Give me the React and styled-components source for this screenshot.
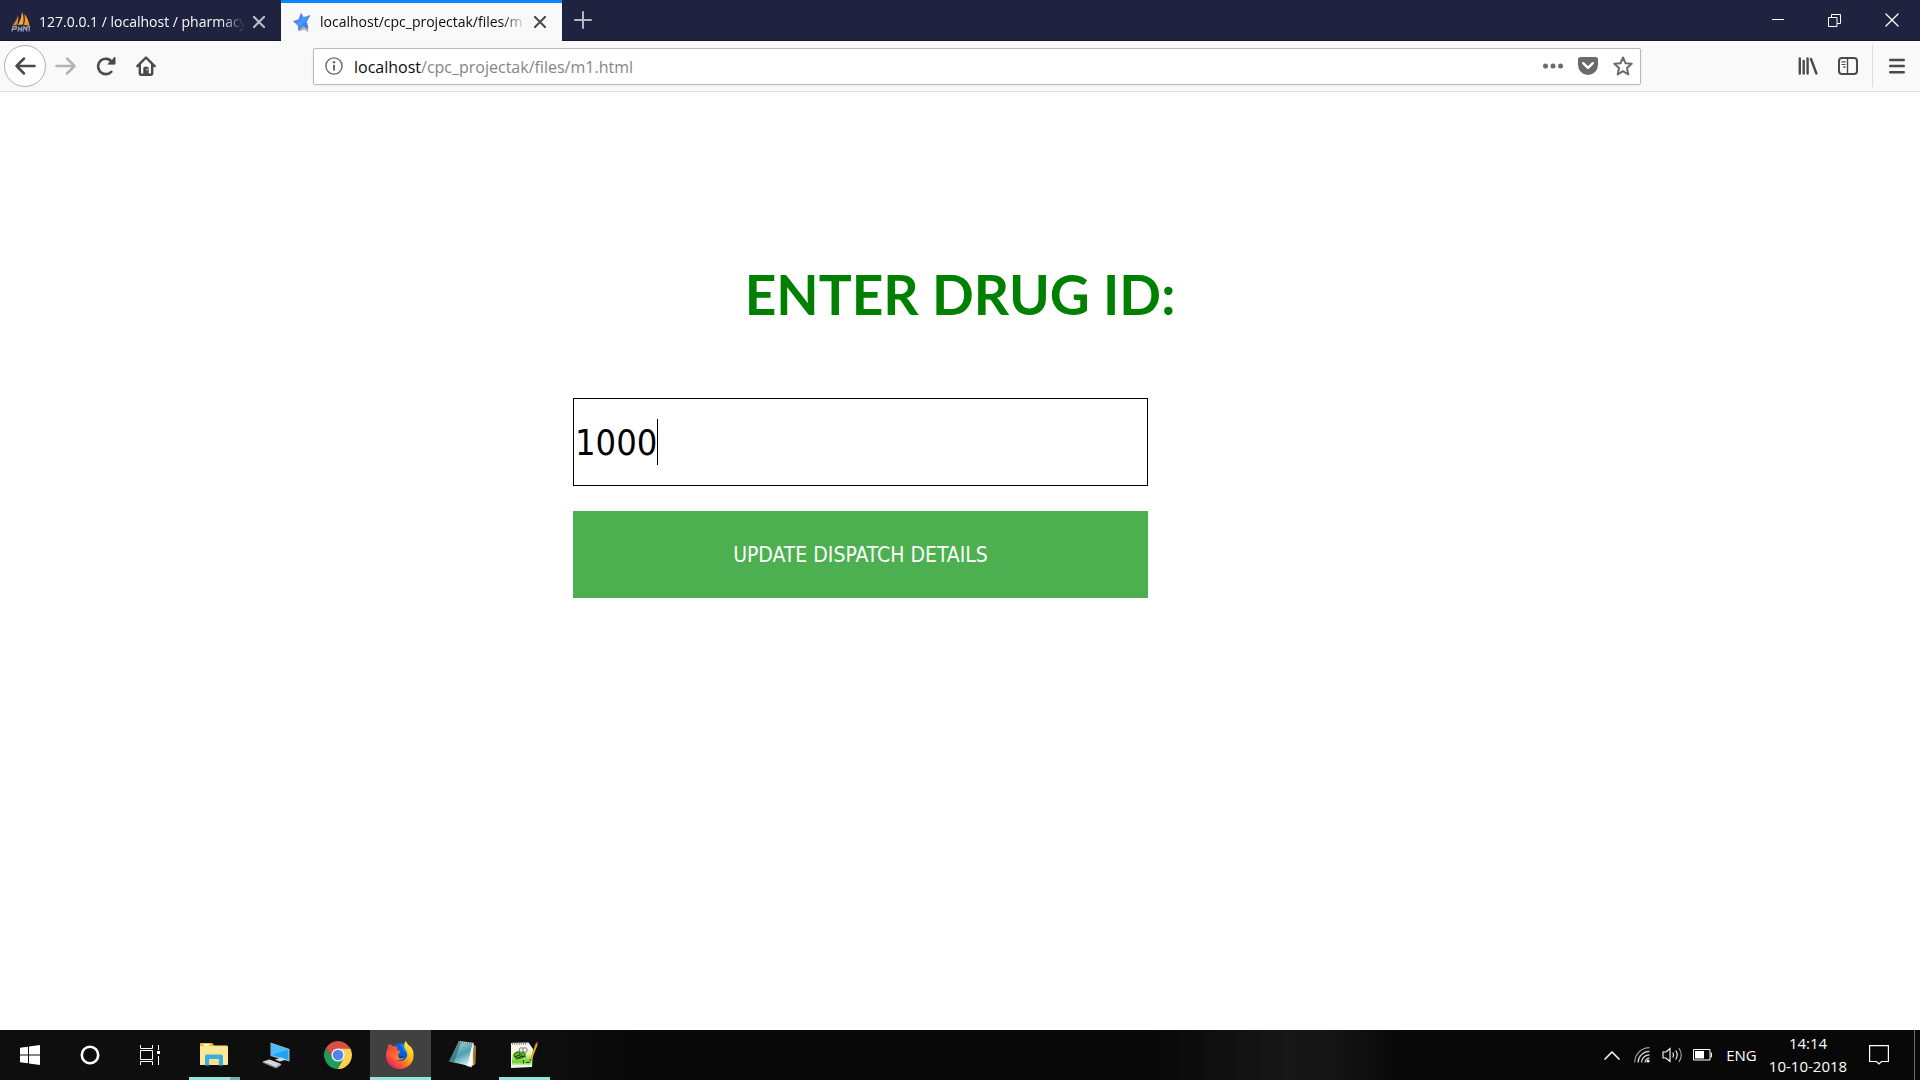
import React, { useState } from "react";
import styled, { createGlobalStyle } from "styled-components";

const uiFont = '"Open Sans", "Noto Sans", "Liberation Sans", sans-serif';
const formFont = '"DejaVu Sans Condensed", "DejaVu Sans", sans-serif';

const GlobalStyle = createGlobalStyle`
  *, *::before, *::after { box-sizing: border-box; }
  html, body, #root { height: 100%; }
  body { margin: 0; background: #fff; font-family: ${uiFont}; overflow: hidden; }
  button { font: inherit; color: inherit; border: 0; padding: 0; background: none; }
  svg { display: block; flex: none; }
`;

const Screen = styled.div`
  display: flex;
  flex-direction: column;
  height: 100%;
`;

/* ---------- browser tabs ---------- */

const TabStrip = styled.header`
  display: flex;
  height: 41px;
  background: #202340;
  border-bottom: 1px solid #14162b;
  color: #fff;
`;

const Tab = styled.div`
  display: flex;
  align-items: center;
  gap: 8px;
  width: 281px;
  height: ${(p) => (p.$active ? 41 : 40)}px;
  padding: 3px 16px 0 11px;
  background: ${(p) => (p.$active ? "#f9f9fa" : "transparent")};
  box-shadow: ${(p) => (p.$active ? "inset 0 3px 0 #0a84ff" : "none")};
  color: ${(p) => (p.$active ? "#0c0c0d" : "#f9f9fa")};
`;

const TabTitle = styled.span`
  flex: 1;
  min-width: 0;
  overflow: hidden;
  white-space: nowrap;
  font-size: 14px;
  line-height: 20px;
  mask-image: linear-gradient(to left, transparent, #000 24px);
`;

const TabClose = styled.button`
  display: flex;
  color: ${(p) => (p.$active ? "#4a4a4b" : "#bcbdc6")};
`;

const NewTab = styled.button`
  display: grid;
  place-items: center;
  width: 42px;
  color: #b5b6c0;
`;

const WindowControls = styled.div`
  display: flex;
  margin-left: auto;
`;

const WindowButton = styled.button`
  display: grid;
  place-items: center;
  width: 57px;
  height: 40px;
`;

/* ---------- navigation toolbar ---------- */

const Toolbar = styled.nav`
  display: flex;
  align-items: center;
  height: 51px;
  padding-left: 4px;
  background: #f9f9fa;
  border-bottom: 1px solid #e0e0e1;
  color: #4a4a4b;
`;

const BackButton = styled.button`
  display: grid;
  place-items: center;
  width: 42px;
  height: 42px;
  border: 1px solid #b0b0b1;
  border-radius: 50%;
  background: #fff;
`;

const ToolButton = styled.button`
  display: grid;
  place-items: center;
  width: ${(p) => p.$width || 40}px;
  height: 36px;
  color: ${(p) => (p.disabled ? "#b3b3b4" : "inherit")};
`;

const Spacer = styled.div`
  flex: 0 1 147px;
`;

const Divider = styled.div`
  width: 1px;
  height: 42px;
  margin-left: 4px;
  background: #dcdcdd;
`;

const UrlBar = styled.div`
  display: flex;
  flex: 1;
  align-items: center;
  height: 37px;
  border: 1px solid #b8b8b9;
  border-radius: 2px;
  background: #fff;
  box-shadow: 0 1px 3px rgba(0, 0, 0, 0.06);
  color: #6a6a6b;
`;

const SiteInfo = styled.button`
  display: grid;
  place-items: center;
  width: 40px;
`;

const Address = styled.a`
  flex: 1;
  padding-top: 2px;
  color: #858586;
  font-size: 16px;
  line-height: 24px;
  text-decoration: none;
`;

const Host = styled.span`
  color: #0c0c0d;
`;

/* ---------- page ---------- */

const Page = styled.main`
  flex: 1;
  background: #fff;
  padding-top: 166px;
`;

const Heading = styled.h1`
  margin: 0;
  color: #008000;
  font-family: Lato, Carlito, sans-serif;
  font-size: 55px;
  font-weight: 700;
  line-height: 72px;
  text-align: center;
`;

const Form = styled.form`
  display: flex;
  flex-direction: column;
  gap: 25px;
  width: calc(30% - 1px);
  margin: 68px 0 0 calc(30% - 3px);
  font-family: ${formFont};
`;

const Field = styled.label`
  display: flex;
  align-items: center;
  height: 88px;
  padding: 0 1px;
  border: 1px solid #000;
  cursor: text;
`;

const DrugInput = styled.input`
  field-sizing: content;
  padding: 2px 0 0;
  border: 0;
  outline: 0;
  background: none;
  color: #000;
  font-family: inherit;
  font-size: 36px;
  line-height: 46px;
`;

const Caret = styled.span`
  width: 1px;
  height: 46px;
  background: #000;
`;

const Submit = styled.button`
  height: 87px;
  background: #4caf50;
  color: #fff;
  font-size: 21px;
  line-height: 24px;
`;

/* ---------- taskbar ---------- */

const Taskbar = styled.footer`
  display: flex;
  height: 50px;
  background: linear-gradient(to right, #0e0e0e 0, #0e0e0e 28%, #080808 33%, #080808 60%, #171717 67%, #161616 69%, #080808 73%);
  color: #fff;
`;

const SystemButton = styled.button`
  display: grid;
  place-items: center;
  width: 60px;
`;

const Apps = styled.div`
  display: flex;
  gap: 1px;
  padding-left: 4px;
`;

const AppButton = styled.button`
  display: flex;
  flex-direction: column;
  align-items: center;
  justify-content: space-between;
  width: 61px;
  padding-top: 11px;
  background: ${(p) => (p.$focused ? "#414141" : "transparent")};

  svg { margin-right: 2px; }
`;

const Running = styled.span`
  width: ${(p) => (p.$wide ? 61 : 51)}px;
  height: 3px;
  border-right: ${(p) => (p.$stacked ? "10px solid #73b3aa" : "0")};
  background: #91e7da;
`;

const Tray = styled.div`
  display: flex;
  align-items: center;
  margin-left: auto;
`;

const TrayButton = styled.button`
  display: grid;
  place-items: center;
  width: 30px;
  height: 50px;
`;

const Language = styled.button`
  width: 49px;
  font-size: 15px;
  line-height: 20px;
`;

const Clock = styled.time`
  width: 84px;
  font-size: 15px;
  line-height: 23px;
  text-align: center;
`;

const ActionCenter = styled.button`
  display: grid;
  place-items: center;
  width: 58px;
  height: 50px;
`;

const ShowDesktop = styled.button`
  width: 6px;
  height: 50px;
  margin-left: 6px;
  border-left: 1px solid #6d6d6d;
`;

/* ---------- drawings ---------- */

const Cross = ({ size = 12, weight = 2 }) => (
  <svg width={size} height={size} viewBox="0 0 12 12" fill="none" stroke="currentColor" strokeWidth={weight} strokeLinecap="round">
    <path d="M.8.8l10.4 10.4M11.2.8L.8 11.2" />
  </svg>
);

const SailsIcon = () => (
  <svg width="20" height="20" viewBox="0 0 20 20">
    <path d="M7 3Q6.500 7 1.500 13.500L6.500 12.500Q8 7 7 3z" fill="#d98a2c" />
    <path d="M11 0Q10.500 7 7 13L12 12.500Q13.500 5 11 0z" fill="#f7a73c" />
    <path d="M13.500 2Q14.500 8 13 13L18.500 13.500Q17.500 7 13.500 2z" fill="#f29a20" />
    <path d="M1 19.500L2 14.500H5.500L5 17H2M7 19.500L8 14.500M7.500 17H10.500M10 19.500L11 14.500M12 19.500L13 14.500L14.500 17L16.500 14.500H18.500L18 19.500M15.500 19.500L16 16" fill="none" stroke="#9a9bb2" strokeWidth="1.300" />
  </svg>
);

const StarFavicon = () => (
  <svg width="20" height="20" viewBox="0 0 20 20">
    <defs>
      <linearGradient id="starBlue" x1="0" y1="0" x2="1" y2="1">
        <stop offset="0" stopColor="#1a5fe0" />
        <stop offset=".5" stopColor="#4d9bff" />
        <stop offset="1" stopColor="#1c5bd6" />
      </linearGradient>
    </defs>
    <path d="M3 10.500L7 15L7 19L12 17L16 19.500L15 14" fill="#b5b0a6" stroke="#b5b0a6" strokeLinejoin="round" />
    <path d="M9 1.500L11.500 5.500L18 3.500L14.500 9.500L16 16.500L11.500 14L6.500 18L6.500 12.500L1.500 9.500L7 7.500z" fill="url(#starBlue)" stroke="#3478e8" strokeWidth=".6" strokeLinejoin="round" />
  </svg>
);

const PlusIcon = () => (
  <svg width="18" height="18" viewBox="0 0 18 18" stroke="currentColor" strokeWidth="2" strokeLinecap="round">
    <path d="M9 1v16M1 9h16" />
  </svg>
);

const Minimize = () => (
  <svg width="12" height="2" viewBox="0 0 12 2"><path d="M0 0h12v1H0z" fill="#fff" /></svg>
);

const Restore = () => (
  <svg width="13" height="13" viewBox="0 0 13 13" fill="none" stroke="#fff">
    <path d="M.5 3.500h8.500v9H.5zM3.500 3.500V.5h9v9H9" />
  </svg>
);

const ArrowLeft = () => (
  <svg width="22" height="20" viewBox="0 0 22 20" fill="none" stroke="currentColor" strokeWidth="2.500" strokeLinecap="round" strokeLinejoin="round">
    <path d="M20.500 10H2.500M10 2.500L2.500 10L10 17.500" />
  </svg>
);

const ArrowRight = () => (
  <svg width="22" height="20" viewBox="0 0 22 20" fill="none" stroke="currentColor" strokeWidth="2.500" strokeLinecap="round" strokeLinejoin="round">
    <path d="M1.500 10H19.500M12 2.500L19.500 10L12 17.500" />
  </svg>
);

const Reload = () => (
  <svg width="20" height="20" viewBox="0 0 20 20" fill="none" stroke="currentColor" strokeWidth="2.600" strokeLinecap="round">
    <path d="M15.300 15.800A7.700 7.700 0 1 1 16.200 6.200" />
    <path d="M18.700 1v7.500h-7.500z" fill="currentColor" stroke="none" />
    <path d="M18.500 2v5.300h-5" strokeWidth="2" />
  </svg>
);

const Home = () => (
  <svg width="20" height="20" viewBox="0 0 20 20" fill="none" stroke="currentColor" strokeWidth="2.400" strokeLinecap="round" strokeLinejoin="round">
    <path d="M1.400 10.200L10 1.500L18.600 10.200" />
    <path d="M3.800 9V17.500Q3.800 18.700 5 18.700H15Q16.200 18.700 16.200 17.500V9" />
    <path d="M7.300 18.500V12Q7.300 10.500 10 10.500Q12.700 10.500 12.700 12V18.500z" fill="currentColor" stroke="none" />
    <path d="M10.600 12.500h1v2h-1z" fill="#f9f9fa" stroke="none" />
  </svg>
);

const Info = () => (
  <svg width="18" height="18" viewBox="0 0 18 18">
    <circle cx="9" cy="9" r="8.100" fill="none" stroke="currentColor" strokeWidth="1.400" />
    <path d="M8 7.800h2V13.500H8z" fill="currentColor" />
    <circle cx="9" cy="5.200" r="1.300" fill="currentColor" />
  </svg>
);

const Dots = () => (
  <svg width="20" height="6" viewBox="0 0 20 6" fill="currentColor">
    <circle cx="2.500" cy="3" r="2.500" /><circle cx="10" cy="3" r="2.500" /><circle cx="17.500" cy="3" r="2.500" />
  </svg>
);

const Pocket = () => (
  <svg width="20" height="18" viewBox="0 0 20 18">
    <path d="M2.500 0h15A2.500 2.500 0 0 1 20 2.500V8A10 10 0 0 1 0 8V2.500A2.500 2.500 0 0 1 2.500 0z" fill="currentColor" />
    <path d="M5.200 6.200L10 10.800L14.800 6.200" fill="none" stroke="#fff" strokeWidth="2.400" strokeLinecap="round" strokeLinejoin="round" />
  </svg>
);

const Bookmark = () => (
  <svg width="20" height="20" viewBox="0 0 20 20" fill="none" stroke="currentColor" strokeWidth="2" strokeLinejoin="round">
    <path d="M10 1.500L12.500 7.200L18.700 7.800L14 12L15.300 18.500L10 15.200L4.700 18.500L6 12L1.300 7.800L7.500 7.200z" />
  </svg>
);

const Library = () => (
  <svg width="20" height="18" viewBox="0 0 20 18" fill="none" stroke="currentColor" strokeWidth="2.400" strokeLinecap="round">
    <path d="M1.800 1.500v15M5.700 4v12.500M9.600 1.500v15M13 2L18.400 16.500" />
  </svg>
);

const SidebarIcon = () => (
  <svg width="20" height="18" viewBox="0 0 20 18" fill="none" stroke="currentColor">
    <rect x="1" y="1" width="18" height="16" rx="3" strokeWidth="2" />
    <path d="M9.500 1v16" strokeWidth="1.400" />
    <path d="M3.500 4.800h4M3.500 7.500h4M5 10.200h2.500" strokeWidth="1.200" />
  </svg>
);

const Menu = () => (
  <svg width="16" height="16" viewBox="0 0 16 16" stroke="currentColor" strokeWidth="2.400" strokeLinecap="round">
    <path d="M1.200 2h13.600M1.200 8h13.600M1.200 14.200h13.600" />
  </svg>
);

const WindowsLogo = () => (
  <svg width="20" height="20" viewBox="0 0 20 20" fill="#fff">
    <path d="M0 2.800L8 1.700V9.400H0zM9 1.500L20 0V9.400H9zM0 10.400H8V18.300L0 17.200zM9 10.400H20V20L9 18.500z" />
  </svg>
);

const Cortana = () => (
  <svg width="20" height="20" viewBox="0 0 20 20">
    <circle cx="10" cy="10" r="8.200" fill="none" stroke="#fff" strokeWidth="2.600" />
  </svg>
);

const TaskView = () => (
  <svg width="20" height="20" viewBox="0 0 20 20" fill="none" stroke="#fff">
    <path d="M.5 5.500h12v9H.5zM.5 0v3.500h12V0M.5 20v-3.500h12V20M18.500 0v5M18.500 11v9" />
    <path d="M17 6h3v3h-3z" fill="#fff" stroke="none" />
  </svg>
);

const Explorer = () => (
  <svg width="28" height="28" viewBox="0 0 28 28">
    <path d="M0 3Q0 2 1 2H12L14 4.500H27.500V24H0z" fill="#fbe08a" />
    <path d="M0 3Q0 2 1 2H12L13.500 5H0z" fill="#f4b81e" />
    <path d="M3.500 3h6v1.800h-6z" fill="#fff" />
    <path d="M0 5.500H28V23.500H0z" fill="#ffe796" />
    <path d="M5 24.500V15Q5 13.500 6.500 13.500H21.500Q23 13.500 23 15V24.500H18.800V18H9.200V24.500z" fill="#3aaee0" />
    <path d="M10 18.500h8v4.500h-8z" fill="#fbdf86" />
  </svg>
);

const Computer = () => (
  <svg width="28" height="28" viewBox="0 0 28 28">
    <path d="M8.500 1.500L27.500 8V20.500L8.500 15z" fill="#9fb9c9" />
    <path d="M9.500 3L26.300 8.700V19L9.500 14z" fill="#1fa3f4" />
    <path d="M9.500 3L26.300 8.700L9.500 14z" fill="#4cbcff" />
    <path d="M13 18.500L19 16.500L24.500 18.500L18 20.500z" fill="#cfd6db" />
    <path d="M1 20.500L7.500 18.500L19 23L14 26.500z" fill="#e6e9eb" />
    <path d="M1 20.500L14 25.500L19 23V24L14 27L1 21.500zM4 19.800L16.500 24.500M6 19.200L17.500 23.700" fill="#99a3aa" stroke="#a7b0b6" strokeWidth=".5" />
  </svg>
);

const Chrome = () => (
  <svg width="28" height="28" viewBox="0 0 28 28">
    <path d="M14 14L1.900 7A14 14 0 0 1 26.100 7z" fill="#d94f44" />
    <path d="M14 7.500H26.400A14 14 0 0 1 13.500 28L19.600 17.200z" fill="#fdd154" />
    <path d="M1.900 7A14 14 0 0 0 13.500 28L19.600 17.200L8.400 17.200z" fill="#1b9d5b" />
    <path d="M14 7.500H26.400L26.100 7H1.900L8.400 17.200z" fill="#d94f44" />
    <circle cx="14" cy="14" r="6.600" fill="#f3f3f3" />
    <circle cx="14" cy="14" r="5.200" fill="#4a86ee" />
  </svg>
);

const Firefox = () => (
  <svg width="28" height="28" viewBox="0 0 28 28">
    <defs>
      <linearGradient id="fxBody" x1=".9" y1=".1" x2=".15" y2=".9">
        <stop offset="0" stopColor="#fff143" />
        <stop offset=".35" stopColor="#ffba1c" />
        <stop offset=".65" stopColor="#ff6a1f" />
        <stop offset="1" stopColor="#ec1b78" />
      </linearGradient>
      <linearGradient id="fxFace" x1="0" y1="0" x2="1" y2="1">
        <stop offset="0" stopColor="#f52e45" />
        <stop offset="1" stopColor="#ff9a1e" />
      </linearGradient>
    </defs>
    <circle cx="14.500" cy="13" r="11" fill="#0a5fd6" />
    <path d="M14 3Q20 2.500 23 7L21 13L17 9z" fill="#0a84ff" />
    <path d="M2 7Q0 10 0 15A13.700 13 0 0 0 27.500 15Q28 10 25 6Q22 4 19.500 0Q17 4 19 8Q22 11 21 15.500Q19 20 14.500 20Q9 20 9 14L8 6L3 3z" fill="url(#fxBody)" />
    <path d="M3 3Q4.500 5 6.500 5.500Q9 4.800 11.500 6Q11 8 11.500 9.500Q14.500 9 14.500 10.500Q12.500 12 12 14Q14 17 18 16.500Q16 19.500 12 19Q5 18 1 12Q1.500 7 3 3z" fill="url(#fxFace)" />
    <path d="M12 14Q14 16 18.500 15Q17 18 13.500 17.500z" fill="#063e9e" />
  </svg>
);

const Notepad = () => (
  <svg width="28" height="28" viewBox="0 0 28 28">
    <defs>
      <linearGradient id="pad" x1=".2" y1="0" x2=".7" y2="1">
        <stop offset="0" stopColor="#a5d3dc" />
        <stop offset=".55" stopColor="#4e9fb1" />
        <stop offset="1" stopColor="#d4eef1" />
      </linearGradient>
    </defs>
    <path d="M24 3L28 5L27.500 23L23 26z" fill="#a27a2d" />
    <path d="M10.500 0L26 2L23.500 26.500L17 24z" fill="#e6eded" />
    <path d="M10.500 1L24.500 3L19.500 24.500L1 20.500z" fill="url(#pad)" />
    <path d="M10.500 1L13 1.500L6 21.500L1 20.500z" fill="#2b5d68" opacity=".55" />
    <path d="M24 5L25.500 24L19.500 25.500z" fill="#fff" opacity=".8" />
    <path d="M11 .8L26 2.500" stroke="#777" strokeWidth="2" strokeDasharray="1 1" />
  </svg>
);

const NotepadPlus = () => (
  <svg width="28" height="28" viewBox="0 0 28 28">
    <defs>
      <linearGradient id="leaf" x1="0" y1="0" x2="0" y2="1">
        <stop offset="0" stopColor="#f7fbe9" />
        <stop offset=".35" stopColor="#e6f5a8" />
        <stop offset=".8" stopColor="#69cf25" />
        <stop offset="1" stopColor="#e4f5d5" />
      </linearGradient>
    </defs>
    <path d="M1 2L18.500 1.500L23 8L22 26L1 27z" fill="#f5f5f2" />
    <path d="M2 7H21.500V24.500H2z" fill="url(#leaf)" />
    <path d="M2 2.500H17.500" stroke="#777" strokeWidth="2.500" strokeDasharray="1 1.200" />
    <path d="M4 13Q8 9 14 11.500Q17 14 13 16.500Q7 19 4 15.500z" fill="#5eb82b" stroke="#1f471b" strokeWidth=".9" />
    <path d="M6 18.500Q11 14 16 16M9 12L12.500 15M4.500 16L10 14M13.500 19V22.500M16 21.500H19.500" fill="none" stroke="#173b14" strokeWidth="1" />
    <circle cx="11.500" cy="9" r="2.300" fill="#eee" stroke="#666" strokeWidth=".8" />
    <circle cx="15" cy="9" r="2.300" fill="#eee" stroke="#666" strokeWidth=".8" />
    <path d="M20 18.500L25.700 2.500L27.800 3.300L21.700 19L19.500 20.500z" fill="#e8a51d" />
    <path d="M25.700 2.500L26.200 .8L28 1.600L27.800 3.300z" fill="#a64236" />
    <path d="M19.500 20.500L20 18L21.500 19z" fill="#4b3420" />
  </svg>
);

const Chevron = () => (
  <svg width="16" height="9" viewBox="0 0 16 9" fill="none" stroke="#fff" strokeWidth="1.500"><path d="M.5 8.500L8 1L15.500 8.500" /></svg>
);

const Wifi = () => (
  <svg width="16" height="16" viewBox="0 0 16 16" fill="none" stroke="#ddd" strokeWidth="1.200">
    <path d="M.7 15.500A14.800 14.800 0 0 1 15.500.7" stroke="#999" />
    <path d="M4 15.500A11.500 11.500 0 0 1 15.500 4.300M7.500 15.500A8 8 0 0 1 15.500 7.800M11 15.500A4.500 4.500 0 0 1 15.500 11.200" />
    <circle cx="14" cy="14" r="1.600" fill="#fff" stroke="none" />
  </svg>
);

const Volume = () => (
  <svg width="21" height="18" viewBox="0 0 21 18" fill="none" stroke="#fff" strokeWidth="1.100">
    <path d="M1 6H4L8 2.500V15.500L4 12H1z" />
    <path d="M10.800 6.500Q12.300 9 10.800 11.500M13.700 4.500Q16.700 9 13.700 13.500" />
    <path d="M16.800 2Q21.800 9 16.800 16" stroke="#aaa" />
  </svg>
);

const Battery = () => (
  <svg width="19" height="12" viewBox="0 0 19 12">
    <path d="M.5.5h16.500v10.500H.5zM17.500 4h1v4h-1" fill="none" stroke="#fff" />
    <path d="M2 2h9v7.500H2z" fill="#fff" />
  </svg>
);

const Message = () => (
  <svg width="20" height="20" viewBox="0 0 20 20" fill="none" stroke="#fff" strokeWidth="1.200">
    <path d="M.6.6H19.400V16.500H12.500L10 19L7.500 16.500H.6z" />
  </svg>
);

const apps = [
  { name: "File Explorer", Icon: Explorer, running: true, stacked: true },
  { name: "This PC", Icon: Computer },
  { name: "Google Chrome", Icon: Chrome },
  { name: "Firefox", Icon: Firefox, running: true, focused: true },
  { name: "Notepad", Icon: Notepad },
  { name: "Notepad++", Icon: NotepadPlus, running: true },
];

export default function App() {
  const [drugId, setDrugId] = useState("1000");

  return (
    <Screen>
      <GlobalStyle />
      <TabStrip>
        <Tab>
          <SailsIcon />
          <TabTitle>127.0.0.1 / localhost / pharmacy</TabTitle>
          <TabClose aria-label="Close tab"><Cross /></TabClose>
        </Tab>
        <Tab $active>
          <StarFavicon />
          <TabTitle>localhost/cpc_projectak/files/m1.html</TabTitle>
          <TabClose $active aria-label="Close tab"><Cross /></TabClose>
        </Tab>
        <NewTab aria-label="New tab"><PlusIcon /></NewTab>
        <WindowControls>
          <WindowButton aria-label="Minimize"><Minimize /></WindowButton>
          <WindowButton aria-label="Restore"><Restore /></WindowButton>
          <WindowButton aria-label="Close"><Cross size={14} weight={1.1} /></WindowButton>
        </WindowControls>
      </TabStrip>

      <Toolbar>
        <BackButton aria-label="Back"><ArrowLeft /></BackButton>
        <ToolButton disabled aria-label="Forward"><ArrowRight /></ToolButton>
        <ToolButton aria-label="Reload"><Reload /></ToolButton>
        <ToolButton aria-label="Home"><Home /></ToolButton>
        <Spacer />
        <UrlBar>
          <SiteInfo aria-label="Site information"><Info /></SiteInfo>
          <Address href="#"><Host>localhost</Host>/cpc_projectak/files/m1.html</Address>
          <ToolButton $width={35} aria-label="Page actions"><Dots /></ToolButton>
          <ToolButton $width={35} aria-label="Save to Pocket"><Pocket /></ToolButton>
          <ToolButton $width={35} aria-label="Bookmark this page"><Bookmark /></ToolButton>
        </UrlBar>
        <Spacer />
        <ToolButton aria-label="Library"><Library /></ToolButton>
        <ToolButton aria-label="Sidebars"><SidebarIcon /></ToolButton>
        <Divider />
        <ToolButton $width={47} aria-label="Menu"><Menu /></ToolButton>
      </Toolbar>

      <Page>
        <Heading id="drug-heading">ENTER DRUG ID:</Heading>
        <Form onSubmit={(e) => e.preventDefault()}>
          <Field htmlFor="drug-id">
            <DrugInput
              id="drug-id"
              type="text"
              aria-labelledby="drug-heading"
              value={drugId}
              onChange={(e) => setDrugId(e.target.value)}
            />
            <Caret />
          </Field>
          <Submit type="submit">UPDATE DISPATCH DETAILS</Submit>
        </Form>
      </Page>

      <Taskbar>
        <SystemButton aria-label="Start"><WindowsLogo /></SystemButton>
        <SystemButton aria-label="Cortana"><Cortana /></SystemButton>
        <SystemButton aria-label="Task view"><TaskView /></SystemButton>
        <Apps>
          {apps.map(({ name, Icon, running, focused, stacked }) => (
            <AppButton key={name} $focused={focused} aria-label={name}>
              <Icon />
              {running && <Running $wide={focused} $stacked={stacked} />}
            </AppButton>
          ))}
        </Apps>
        <Tray>
          <TrayButton aria-label="Hidden icons"><Chevron /></TrayButton>
          <TrayButton aria-label="Network"><Wifi /></TrayButton>
          <TrayButton aria-label="Volume"><Volume /></TrayButton>
          <TrayButton aria-label="Battery"><Battery /></TrayButton>
          <Language>ENG</Language>
          <Clock>14:14<br />10-10-2018</Clock>
          <ActionCenter aria-label="Notifications"><Message /></ActionCenter>
          <ShowDesktop aria-label="Show desktop" />
        </Tray>
      </Taskbar>
    </Screen>
  );
}
